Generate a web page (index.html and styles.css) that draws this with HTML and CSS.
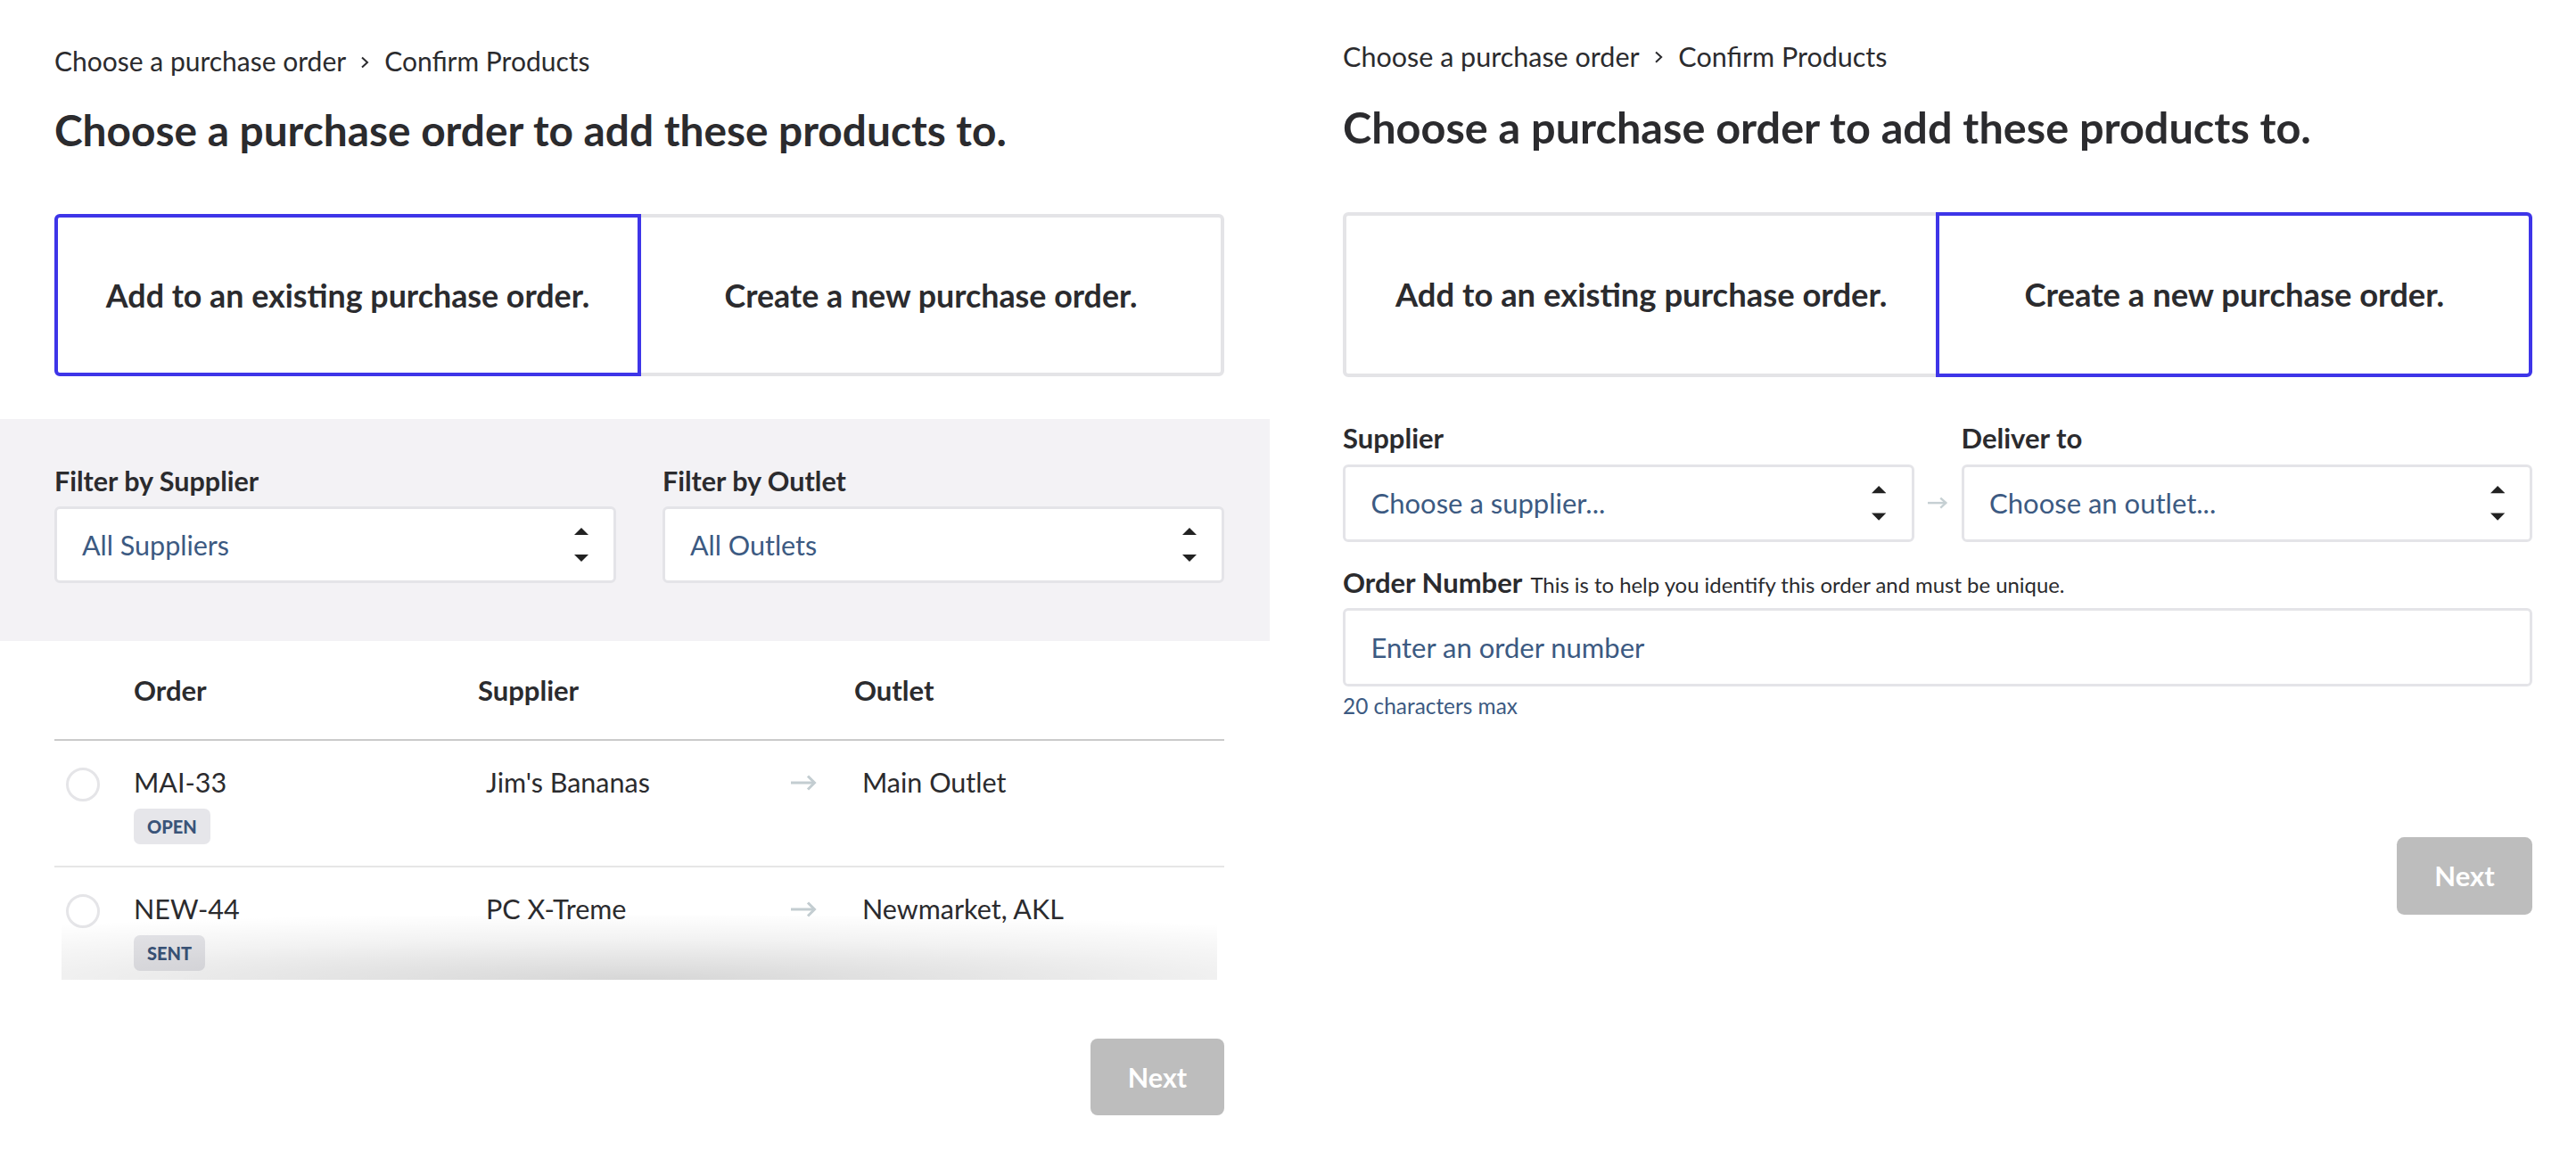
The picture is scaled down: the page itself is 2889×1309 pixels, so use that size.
FILE: index.html
```html
<!DOCTYPE html>
<html lang="en">
<head>
<meta charset="utf-8">
<title>Choose a purchase order</title>
<link rel="stylesheet" href="styles.css">
</head>
<body>
<div class="page">

  <section class="panel panel--left">
    <nav class="crumbs inset">
      <span>Choose a purchase order</span>
      <svg class="crumbs__sep" width="10" height="14" viewBox="0 0 10 14"><polyline points="2,1.5 8,7 2,12.5" fill="none" stroke="#2b2b2e" stroke-width="2"/></svg>
      <span>Confirm Products</span>
    </nav>
    <h1 class="title inset">Choose a purchase order to add these products to.</h1>
    <div class="choices inset">
      <button class="choice is-active">Add to an existing purchase order.</button>
      <button class="choice">Create a new purchase order.</button>
    </div>

    <div class="filters">
      <div class="filters__grid inset">
        <div class="field">
          <div class="field-label">Filter by Supplier</div>
          <div class="select">
            <span>All Suppliers</span>
            <svg class="select__arrows" width="16" height="38" viewBox="0 0 16 38"><polygon points="0,8 8,0 16,8" fill="#222"/><polygon points="0,30 16,30 8,38" fill="#222"/></svg>
          </div>
        </div>
        <div class="field">
          <div class="field-label">Filter by Outlet</div>
          <div class="select">
            <span>All Outlets</span>
            <svg class="select__arrows" width="16" height="38" viewBox="0 0 16 38"><polygon points="0,8 8,0 16,8" fill="#222"/><polygon points="0,30 16,30 8,38" fill="#222"/></svg>
          </div>
        </div>
      </div>
    </div>

    <div class="orders inset">
      <div class="orders__head">
        <span></span>
        <span>Order</span>
        <span>Supplier</span>
        <span></span>
        <span>Outlet</span>
      </div>
      <div class="orders__body">
        <div class="order-row">
          <span class="radio"></span>
          <div class="order-row__id">
            <div>MAI-33</div>
            <span class="badge">OPEN</span>
          </div>
          <div class="order-row__cell">Jim's Bananas</div>
          <svg class="order-row__arrow" width="30" height="18" viewBox="0 0 30 18"><line x1="1" y1="9" x2="27" y2="9" stroke="#c3cdd1" stroke-width="3"/><polyline points="20,1.5 27.5,9 20,16.5" fill="none" stroke="#c3cdd1" stroke-width="3"/></svg>
          <div class="order-row__cell">Main Outlet</div>
        </div>
        <div class="order-row">
          <span class="radio"></span>
          <div class="order-row__id">
            <div>NEW-44</div>
            <span class="badge">SENT</span>
          </div>
          <div class="order-row__cell">PC X-Treme</div>
          <svg class="order-row__arrow" width="30" height="18" viewBox="0 0 30 18"><line x1="1" y1="9" x2="27" y2="9" stroke="#c3cdd1" stroke-width="3"/><polyline points="20,1.5 27.5,9 20,16.5" fill="none" stroke="#c3cdd1" stroke-width="3"/></svg>
          <div class="order-row__cell">Newmarket, AKL</div>
        </div>
        <div class="orders__fade"></div>
      </div>
    </div>

    <div class="actions actions--left inset">
      <button class="btn-next">Next</button>
    </div>
  </section>

  <section class="panel panel--right">
    <nav class="crumbs inset">
      <span>Choose a purchase order</span>
      <svg class="crumbs__sep" width="10" height="14" viewBox="0 0 10 14"><polyline points="2,1.5 8,7 2,12.5" fill="none" stroke="#2b2b2e" stroke-width="2"/></svg>
      <span>Confirm Products</span>
    </nav>
    <h1 class="title inset">Choose a purchase order to add these products to.</h1>
    <div class="choices inset">
      <button class="choice">Add to an existing purchase order.</button>
      <button class="choice is-active">Create a new purchase order.</button>
    </div>

    <div class="new-order inset">
      <div class="route">
        <div class="field-label route__from-label">Supplier</div>
        <div class="field-label route__to-label">Deliver to</div>
        <div class="select route__from">
          <span>Choose a supplier...</span>
          <svg class="select__arrows" width="16" height="38" viewBox="0 0 16 38"><polygon points="0,8 8,0 16,8" fill="#222"/><polygon points="0,30 16,30 8,38" fill="#222"/></svg>
        </div>
        <svg class="route__arrow" width="23" height="14" viewBox="0 0 23 14"><line x1="1" y1="7" x2="21" y2="7" stroke="#c6d0d3" stroke-width="2.4"/><polyline points="15,1.5 21,7 15,12.5" fill="none" stroke="#c6d0d3" stroke-width="2.4"/></svg>
        <div class="select route__to">
          <span>Choose an outlet...</span>
          <svg class="select__arrows" width="16" height="38" viewBox="0 0 16 38"><polygon points="0,8 8,0 16,8" fill="#222"/><polygon points="0,30 16,30 8,38" fill="#222"/></svg>
        </div>
      </div>

      <div class="number-label">
        <span class="field-label">Order Number</span>
        <span class="number-label__help">This is to help you identify this order and must be unique.</span>
      </div>
      <input class="text-input" type="text" placeholder="Enter an order number">
      <div class="hint">20 characters max</div>
    </div>

    <div class="actions actions--right inset">
      <button class="btn-next">Next</button>
    </div>
  </section>

</div>
</body>
</html>
```

FILE: styles.css
```css
* {
  box-sizing: border-box;
}

html, body {
  margin: 0;
  background: #ffffff;
}

body {
  font-family: Lato, "Noto Sans", "Liberation Sans", sans-serif;
  color: #2b2b2e;
  font-size: 30.5px;
}

.page {
  display: flex;
  align-items: flex-start;
  gap: 20px;
  width: 2889px;
}

.panel {
  flex: none;
}

.panel--left {
  width: 1424px;
  padding-top: 51px;
}

.panel--right {
  width: 1421px;
  padding-top: 45px;
  zoom: 1.017;
}

.inset {
  width: 1312px;
  margin-left: 61px;
}

/* breadcrumb */
.crumbs {
  display: flex;
  align-items: center;
  font-size: 30px;
  line-height: 35px;
}

.crumbs__sep {
  margin: 2px 17px 0 16px;
}

/* heading */
.title {
  margin-top: 30px;
  margin-bottom: 0;
  font-size: 47.8px;
  line-height: 59px;
  font-weight: 700;
}

/* option cards */
.choices {
  display: flex;
  height: 182px;
  margin-top: 65px;
}

.choice {
  flex: 1 1 0;
  min-width: 0;
  margin: 0;
  padding: 0;
  background: #ffffff;
  border: 4px solid #e4e4e7;
  font-family: inherit;
  font-size: 35.8px;
  font-weight: 700;
  color: #2b2b2e;
  display: flex;
  align-items: center;
  justify-content: center;
}

.choice:first-child {
  border-radius: 6px 0 0 6px;
}

.choice:last-child {
  border-radius: 0 6px 6px 0;
}

.choice + .choice {
  margin-left: -4px;
}

.choice.is-active {
  border-color: #3e35e8;
  z-index: 1;
}

/* filters band */
.filters {
  margin-top: 48px;
  background: #f3f2f5;
  padding: 52px 0 65px;
}

.filters__grid {
  display: grid;
  grid-template-columns: 1fr 1fr;
  column-gap: 52px;
}

.field-label {
  font-size: 30.5px;
  line-height: 34px;
  font-weight: 700;
  color: #2b2b2e;
}

.select {
  margin-top: 12px;
  height: 86px;
  background: #ffffff;
  border: 3px solid #e4e4e8;
  border-radius: 6px;
  display: flex;
  align-items: center;
  justify-content: space-between;
  padding: 0 28px;
  font-size: 30.5px;
  color: #3c5a82;
}

.select__arrows {
  flex: none;
}

/* orders table */
.orders {
  margin-top: 38px;
}

.orders__head,
.order-row {
  display: grid;
  grid-template-columns: 89px 386px 350px 72px 1fr;
}

.orders__head {
  font-size: 31px;
  line-height: 34px;
  font-weight: 700;
  padding-bottom: 38px;
  border-bottom: 2px solid #cbcbcb;
}

.orders__body {
  position: relative;
  height: 268px;
  overflow: hidden;
}

.order-row {
  align-items: start;
  padding: 29px 0 24px;
  border-bottom: 2px solid #e6e6e6;
  line-height: 35px;
}

.radio {
  width: 38px;
  height: 38px;
  margin: 1px 0 0 13px;
  border: 3px solid #e5e5e8;
  border-radius: 50%;
  background: #ffffff;
}

.order-row__id {
  display: flex;
  flex-direction: column;
  align-items: flex-start;
}

.badge {
  margin-top: 12px;
  height: 40px;
  padding: 0 15px;
  border-radius: 7px;
  background: #e6e6ea;
  color: #3a5479;
  font-size: 20px;
  line-height: 40px;
  font-weight: 900;
}

.order-row__cell {
  padding-left: 9px;
}

.order-row__arrow {
  margin-top: 9px;
}

.orders__fade {
  position: absolute;
  left: 8px;
  right: 8px;
  bottom: 0;
  height: 72px;
  pointer-events: none;
  background: radial-gradient(120% 140% at 50% 100%, rgba(0, 0, 0, 0.16) 0%, rgba(0, 0, 0, 0.05) 45%, rgba(0, 0, 0, 0) 75%);
}

/* actions */
.actions {
  display: flex;
  justify-content: flex-end;
}

.actions--left {
  margin-top: 66px;
}

.actions--right {
  margin-top: 130px;
}

.btn-next {
  width: 150px;
  height: 86px;
  border: none;
  border-radius: 8px;
  background: #bdbdbd;
  color: #ffffff;
  font-family: inherit;
  font-size: 30.5px;
  font-weight: 700;
}

/* new order form */
.new-order {
  margin-top: 50px;
}

.route {
  display: grid;
  grid-template-columns: 1fr 52px 1fr;
  align-items: center;
}

.route__from-label {
  grid-column: 1;
  grid-row: 1;
}

.route__to-label {
  grid-column: 3;
  grid-row: 1;
}

.route__from {
  grid-column: 1;
  grid-row: 2;
}

.route__arrow {
  grid-column: 2;
  grid-row: 2;
  justify-self: center;
  margin-top: 12px;
}

.route__to {
  grid-column: 3;
  grid-row: 2;
}

.number-label {
  margin-top: 27px;
  display: flex;
  align-items: baseline;
  gap: 9px;
}

.number-label__help {
  font-size: 23.5px;
  color: #2b2b2e;
}

.text-input {
  display: block;
  width: 100%;
  margin-top: 12px;
  height: 86px;
  border: 3px solid #e4e4e8;
  border-radius: 6px;
  padding: 0 28px;
  font-family: inherit;
  font-size: 30.5px;
  color: #3c5a82;
  background: #ffffff;
  outline: none;
}

.text-input::placeholder {
  color: #3c5a82;
  opacity: 1;
}

.hint {
  margin-top: 8px;
  font-size: 24px;
  line-height: 28px;
  color: #3c5a82;
}
```
